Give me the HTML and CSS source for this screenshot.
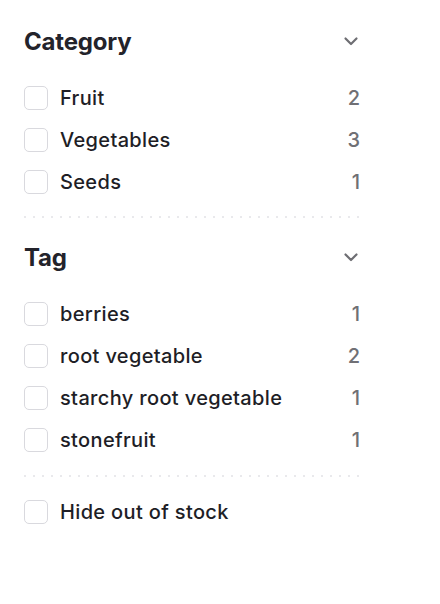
FILE: index.html
```html
<!DOCTYPE html>
<html lang="en">
<head>
    <meta charset="UTF-8">
    <title>Filters</title>
    <link rel="stylesheet" href="styles.css">
</head>
<body>
    <div class="filters">
        <div class="filter-group">
            <div class="group-header">
                <h2>Category</h2>
                <svg class="chevron" width="18" height="18" viewBox="0 0 18 18"><path d="M3.5 6.5 L9 12 L14.5 6.5" fill="none" stroke="currentColor" stroke-width="2.2" stroke-linecap="round" stroke-linejoin="round"/></svg>
            </div>
            <ul class="options">
                <li class="option"><span class="box"></span><span class="label">Fruit</span><span class="count">2</span></li>
                <li class="option"><span class="box"></span><span class="label">Vegetables</span><span class="count">3</span></li>
                <li class="option"><span class="box"></span><span class="label">Seeds</span><span class="count">1</span></li>
            </ul>
        </div>
        <div class="divider"></div>

        <div class="filter-group">
            <div class="group-header">
                <h2>Tag</h2>
                <svg class="chevron" width="18" height="18" viewBox="0 0 18 18"><path d="M3.5 6.5 L9 12 L14.5 6.5" fill="none" stroke="currentColor" stroke-width="2.2" stroke-linecap="round" stroke-linejoin="round"/></svg>
            </div>
            <ul class="options">
                <li class="option"><span class="box"></span><span class="label">berries</span><span class="count">1</span></li>
                <li class="option"><span class="box"></span><span class="label">root vegetable</span><span class="count">2</span></li>
                <li class="option"><span class="box"></span><span class="label">starchy root vegetable</span><span class="count">1</span></li>
                <li class="option"><span class="box"></span><span class="label">stonefruit</span><span class="count">1</span></li>
            </ul>
        </div>
        <div class="divider"></div>

        <div class="stock">
            <div class="option"><span class="box"></span><span class="label">Hide out of stock</span></div>
        </div>
    </div>
</body>
</html>
```

FILE: styles.css
```css
body {
    margin: 0;
    background-color: #fff;
    font-family: Inter, "Noto Sans", sans-serif;
    color: #1e1e26;
}

.filters {
    width: 336px;
    padding: 24px;
}

.filter-group {
    padding-bottom: 13px;
}

.divider {
    height: 2px;
    background-image: repeating-linear-gradient(to right, #e9e9ec 0 2px, transparent 2px 9px);
}

.divider + .filter-group {
    padding-top: 22px;
    padding-bottom: 14px;
}

.group-header {
    display: flex;
    align-items: center;
    justify-content: space-between;
    height: 34px;
    margin-bottom: 19px;
}

.group-header h2 {
    margin: 0;
    font-size: 24px;
    font-weight: 700;
    letter-spacing: -0.2px;
    color: #23232b;
}

.chevron {
    color: #6e6e73;
}

.options {
    list-style: none;
    margin: 0;
    padding: 0;
}

.option {
    display: flex;
    align-items: center;
    height: 42px;
}

.box {
    width: 22px;
    height: 22px;
    border: 1px solid #d9d9de;
    border-radius: 5px;
    margin-right: 12px;
    flex-shrink: 0;
}

.label {
    flex: 1;
    font-size: 20px;
    font-weight: 500;
    letter-spacing: 0.35px;
}

.count {
    font-size: 20px;
    font-weight: 500;
    color: #707075;
}

.stock {
    padding-top: 14px;
}
```
